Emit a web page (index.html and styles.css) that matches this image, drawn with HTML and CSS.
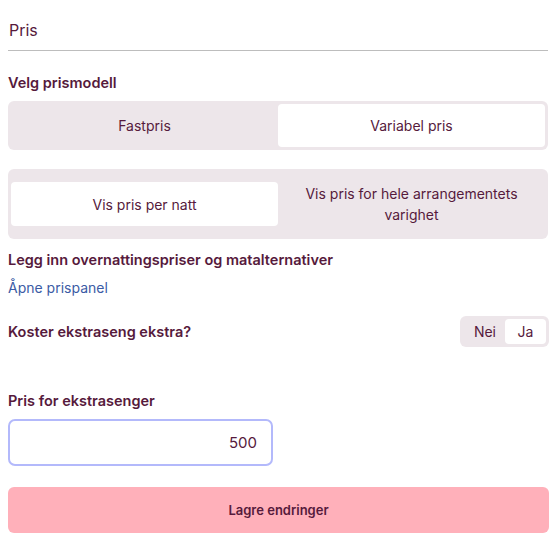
FILE: index.html
```
<!DOCTYPE html>
<html lang="no">
<head>
<meta charset="utf-8">
<link rel="stylesheet" href="styles.css">
</head>
<body>
<div class="page">
  <div class="header">Pris</div>

  <div class="label first">Velg prismodell</div>
  <div class="seg seg-one">
    <div class="seg-item">Fastpris</div>
    <div class="seg-item active">Variabel pris</div>
  </div>

  <div class="seg seg-two">
    <div class="seg-item active">Vis pris per natt</div>
    <div class="seg-item">Vis pris for hele arrangementets varighet</div>
  </div>

  <div class="label">Legg inn overnattingspriser og matalternativer</div>
  <a class="link" href="#">Åpne prispanel</a>

  <div class="row">
    <div class="label inline">Koster ekstraseng ekstra?</div>
    <div class="toggle">
      <div class="toggle-item">Nei</div>
      <div class="toggle-item active">Ja</div>
    </div>
  </div>

  <div class="label price-label">Pris for ekstrasenger</div>
  <div class="input">500</div>

  <div class="save">Lagre endringer</div>
</div>
</body>
</html>
```
FILE: styles.css
```
* { box-sizing: border-box; }
html, body { margin: 0; padding: 0; background: #fff; }
body {
  font-family: Inter, "Noto Sans", sans-serif;
  color: #561a3c;
}
.page {
  padding: 0 11px 0 8px;
  width: 560px;
}
.header {
  font-size: 16px;
  line-height: 24px;
  padding: 18px 0 8px 1px;
  border-bottom: 1px solid #bdbdbd;
  width: 540px;
}
.label {
  font-size: 14.5px;
  font-weight: 600;
  line-height: 20px;
  margin-top: 11px;
}
.label.first { margin-top: 22px; }
.seg {
  display: flex;
  background: #ede6ea;
  border-radius: 6px;
  padding: 3px;
  width: 540px;
  margin-top: 8px;
}
.seg-item {
  flex: 1 1 0;
  display: flex;
  align-items: center;
  justify-content: center;
  text-align: center;
  font-size: 14px;
  line-height: 21px;
  border-radius: 4px;
  padding: 0 16px;
}
.seg-one .seg-item { height: 43px; }
.seg-two { margin-top: 19px; padding: 13px 3px; align-items: center; }
.seg-two .seg-item { min-height: 44px; }
.seg-item.active { background: #fff; }
.link {
  display: block;
  margin-top: 8px;
  font-size: 14px;
  line-height: 20px;
  color: #3b5ba5;
  text-decoration: none;
}
.row {
  display: flex;
  align-items: center;
  justify-content: space-between;
  width: 541px;
  margin-top: 18px;
}
.label.inline { margin-top: 0; }
.toggle {
  display: flex;
  background: #ede6ea;
  border-radius: 6px;
  padding: 3px;
}
.toggle-item {
  font-size: 14px;
  line-height: 25px;
  padding: 0 10px;
  border-radius: 4px;
}
.toggle-item:first-child { padding: 0 9px 0 11px; }
.toggle-item.active { background: #fff; width: 41px; text-align: center; padding: 0; }
.price-label { margin-top: 44px; }
.input {
  margin-top: 8px;
  width: 265px;
  height: 47px;
  border: 2px solid #b3b9fb;
  border-radius: 7px;
  text-align: right;
  padding: 0 14px;
  font-size: 15px;
  line-height: 43px;
}
.save {
  margin-top: 21px;
  width: 541px;
  height: 46px;
  background: #ffb0ba;
  border-radius: 6px;
  display: flex;
  align-items: center;
  justify-content: center;
  font-size: 13px;
  font-weight: 600;
}
```
